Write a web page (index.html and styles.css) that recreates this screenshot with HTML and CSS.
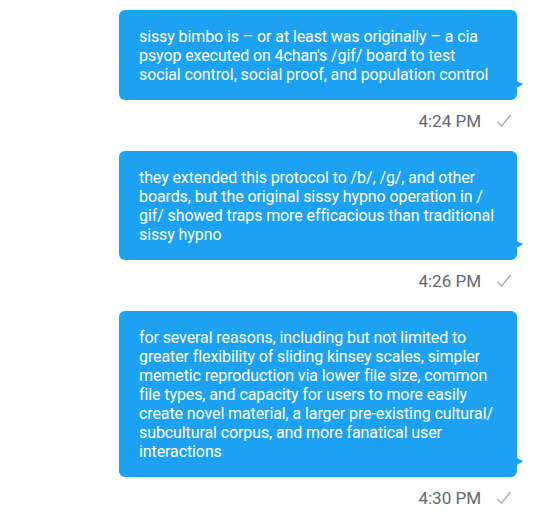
FILE: index.html
```html
<!DOCTYPE html>
<html>
<head>
<meta charset="utf-8">
<link rel="stylesheet" href="styles.css">
</head>
<body>
<div class="chat">
  <div class="msg">
    <div class="bubble">sissy bimbo is – or at least was originally – a cia<br>psyop executed on 4chan's /gif/ board to test<br>social control, social proof, and population control<svg class="tail" width="9" height="11" viewBox="0 0 9 11"><path d="M0 0 Q3 5 7 5.2 Q8.6 5.6 7.2 6.8 Q4 9 0 10.5 Z" fill="#1da1f2"/></svg></div>
    <div class="meta"><span class="time">4:24 PM</span><svg class="check" width="16" height="14" viewBox="0 0 16 14"><path d="M1.5 8 L5.5 12.2 L14.5 1" fill="none" stroke="#a9aeb3" stroke-width="1.5"/></svg></div>
  </div>
  <div class="msg">
    <div class="bubble">they extended this protocol to /b/, /g/, and other<br>boards, but the original sissy hypno operation in /<br>gif/ showed traps more efficacious than traditional<br>sissy hypno<svg class="tail" width="9" height="11" viewBox="0 0 9 11"><path d="M0 0 Q3 5 7 5.2 Q8.6 5.6 7.2 6.8 Q4 9 0 10.5 Z" fill="#1da1f2"/></svg></div>
    <div class="meta"><span class="time">4:26 PM</span><svg class="check" width="16" height="14" viewBox="0 0 16 14"><path d="M1.5 8 L5.5 12.2 L14.5 1" fill="none" stroke="#a9aeb3" stroke-width="1.5"/></svg></div>
  </div>
  <div class="msg">
    <div class="bubble">for several reasons, including but not limited to<br>greater flexibility of sliding kinsey scales, simpler<br>memetic reproduction via lower file size, common<br>file types, and capacity for users to more easily<br>create novel material, a larger pre-existing cultural/<br>subcultural corpus, and more fanatical user<br>interactions<svg class="tail" width="9" height="11" viewBox="0 0 9 11"><path d="M0 0 Q3 5 7 5.2 Q8.6 5.6 7.2 6.8 Q4 9 0 10.5 Z" fill="#1da1f2"/></svg></div>
    <div class="meta"><span class="time">4:30 PM</span><svg class="check" width="16" height="14" viewBox="0 0 16 14"><path d="M1.5 8 L5.5 12.2 L14.5 1" fill="none" stroke="#a9aeb3" stroke-width="1.5"/></svg></div>
  </div>
</div>
</body>
</html>
```
FILE: styles.css
```css
html, body {
  margin: 0;
  padding: 0;
  background: #ffffff;
}
body {
  width: 540px;
  height: 520px;
  overflow: hidden;
  font-family: Roboto, "Liberation Sans", sans-serif;
}
.chat {
  display: flex;
  flex-direction: column;
  align-items: flex-end;
  padding: 10px 23px 0 0;
}
.msg {
  display: flex;
  flex-direction: column;
  align-items: flex-end;
  margin-bottom: 20px;
}
.bubble {
  position: relative;
  box-sizing: border-box;
  width: 398px;
  padding: 17px 10px 16px 20px;
  background: #1da1f2;
  color: #ffffff;
  border-radius: 6px;
  font-size: 16px;
  line-height: 19px;
  letter-spacing: -0.1px;
  white-space: nowrap;
}
.tail {
  position: absolute;
  right: -7px;
  bottom: 11px;
}
.meta {
  display: flex;
  align-items: center;
  gap: 15px;
  padding-top: 11px;
  padding-right: 5px;
  height: 20px;
}
.time {
  font-size: 17px;
  line-height: 20px;
  color: #63686d;
}
.check {
  display: block;
}
```
